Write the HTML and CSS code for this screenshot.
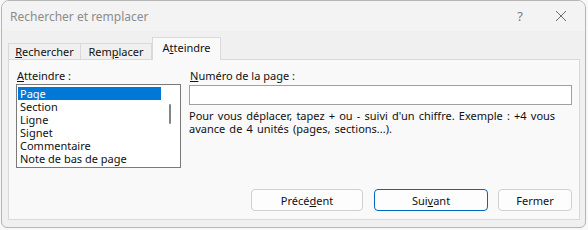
FILE: index.html
```html
<!DOCTYPE html>
<html lang="fr">
<head>
<meta charset="utf-8">
<title>Rechercher et remplacer</title>
<link rel="stylesheet" href="styles.css">
</head>
<body>
<div class="window">
  <div class="titlebar">
    <span class="title">Rechercher et remplacer</span>
    <span class="help">?</span>
    <span class="close">
      <svg width="12" height="12" viewBox="0 0 12 12"><path d="M1 1 L11 11 M11 1 L1 11" stroke="#6a6a6a" stroke-width="1" fill="none"/></svg>
    </span>
  </div>
  <div class="client">
    <div class="tabs">
      <div class="tab tab-1"><u>R</u>echercher</div>
      <div class="tab tab-2">Rem<u>p</u>lacer</div>
      <div class="tab tab-active">A<u>t</u>teindre</div>
    </div>
    <div class="panel">
      <div class="row">
        <div class="col-left">
          <div class="label"><u>A</u>tteindre :</div>
          <div class="listbox">
            <div class="items">
              <div class="item selected">Page</div>
              <div class="item">Section</div>
              <div class="item">Ligne</div>
              <div class="item">Signet</div>
              <div class="item">Commentaire</div>
              <div class="item">Note de bas de page</div>
            </div>
            <div class="scroll"><div class="thumb"></div></div>
          </div>
        </div>
        <div class="col-right">
          <div class="label"><u>N</u>uméro de la page :</div>
          <div class="input"></div>
          <div class="hint">Pour vous déplacer, tapez + ou - suivi d'un chiffre. Exemple : +4 vous avance de 4 unités (pages, sections...).</div>
        </div>
      </div>
      <div class="buttons">
        <div class="btn btn-prev">Précé<u>d</u>ent</div>
        <div class="btn btn-next">Sui<u>v</u>ant</div>
        <div class="btn btn-close">Fermer</div>
      </div>
    </div>
  </div>
</div>
</body>
</html>
```

FILE: styles.css
```css
html, body {
  margin: 0;
  padding: 0;
  background: #f7f7f7;
  font-family: "Noto Sans", "Open Sans", sans-serif;
  font-size: 11px;
  color: #111;
}
u { text-decoration: underline; text-underline-offset: 1px; }

.window {
  margin-left: 1px;
  width: 583px;
  height: 226px;
  border: 1px solid #b5b5b5;
  border-radius: 8px 8px 6px 6px;
  overflow: hidden;
  background: #f0f0f0;
  display: flex;
  flex-direction: column;
}

.titlebar {
  height: 30px;
  background: #f3f3f3;
  display: flex;
  align-items: center;
  padding-left: 8px;
  flex-shrink: 0;
}
.title {
  color: #8c8c8c;
  font-size: 12px;
  flex: 1;
}
.help {
  color: #7a7a7a;
  font-size: 13px;
  width: 38px;
  text-align: center;
}
.close {
  width: 44px;
  display: flex;
  justify-content: center;
  padding-right: 2px;
}

.client {
  flex: 1;
  padding: 7px 5px 7px 6px;
  display: flex;
  flex-direction: column;
}

.tabs {
  display: flex;
  align-items: flex-end;
  height: 21px;
  position: relative;
  z-index: 1;
}
.tab {
  height: 16px;
  border: 1px solid #d9d9d9;
  border-bottom: none;
  background: #f0f0f0;
  box-sizing: border-box;
  text-align: center;
  line-height: 15px;
}
.tab-1 { width: 73px; }
.tab-2 { width: 71px; border-left: none; }
.tab-active {
  width: 69px;
  height: 23px;
  margin-bottom: -1px;
  background: #f9f9f9;
  border-color: #dadada;
  line-height: 20px;
}

.panel {
  flex: 1;
  border: 1px solid #d9d9d9;
  background: #f9f9f9;
  padding: 8px 7px 8px 7px;
  display: flex;
  flex-direction: column;
}

.row {
  display: flex;
  flex: 1;
}
.col-left {
  width: 165px;
  flex-shrink: 0;
  display: flex;
  flex-direction: column;
}
.col-right {
  margin-left: 8px;
  flex: 1;
  display: flex;
  flex-direction: column;
}
.label {
  height: 16px;
  line-height: 16px;
  padding-left: 1px;
}

.listbox {
  height: 84px;
  box-sizing: border-box;
  border: 1px solid #7a7a7a;
  background: #fff;
  display: flex;
  padding: 2px 1px 0 1px;
}
.items {
  width: 143px;
}
.item {
  height: 13px;
  line-height: 13px;
  padding-left: 2px;
  white-space: nowrap;
}
.item.selected {
  background: #0078d7;
  color: #fff;
}
.scroll {
  flex: 1;
  display: flex;
  justify-content: center;
  padding-top: 17px;
}
.thumb {
  width: 2px;
  height: 20px;
  background: #858585;
  border-radius: 1px;
}

.input {
  margin-top: 1px;
  height: 20px;
  width: 383px;
  box-sizing: border-box;
  border: 1px solid #a0a0a0;
  background: #fff;
}
.hint {
  margin-top: 4px;
  line-height: 13px;
  width: 383px;
  word-spacing: 1.3px;
}

.buttons {
  display: flex;
  justify-content: flex-end;
  gap: 11px;
}
.btn {
  height: 22px;
  box-sizing: border-box;
  border: 1px solid #d0d0d0;
  border-radius: 4px;
  background: #fdfdfd;
  display: flex;
  align-items: center;
  justify-content: center;
}
.btn-prev { width: 112px; }
.btn-next { width: 114px; border-color: #0067c0; }
.btn-close { width: 74px; margin-left: -1px; }
```
